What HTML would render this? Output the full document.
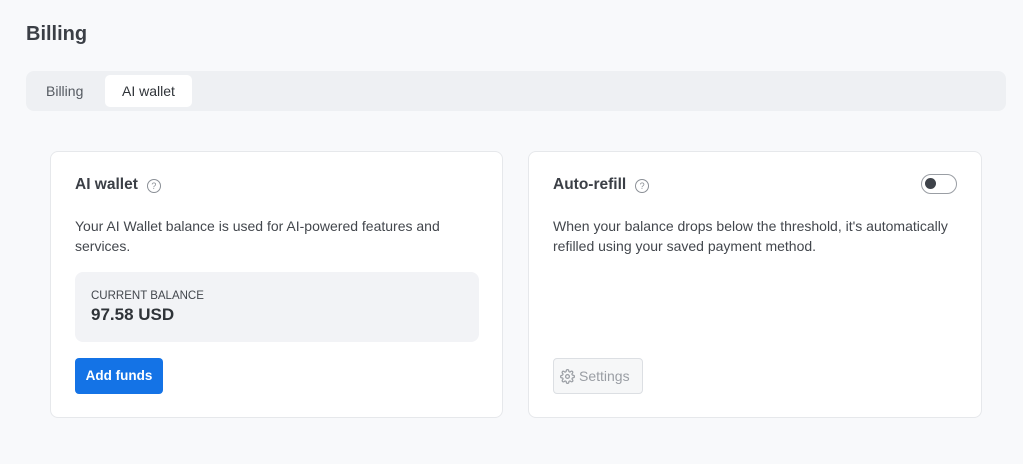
<!DOCTYPE html>
<html><head><style>
*{box-sizing:border-box;margin:0;padding:0}
body{width:1023px;height:464px;background:#f8f9fb;font-family:"Liberation Sans",Arial,sans-serif;color:#3b3f46;position:relative;overflow:hidden}
h1{position:absolute;left:26px;top:23px;font-size:20px;font-weight:bold;color:#3b3f46}
.tabs{position:absolute;left:26px;top:71px;width:980px;height:40px;background:#eef0f3;border-radius:8px}
.tab{position:absolute;top:4px;height:32px;line-height:32px;font-size:14px;color:#555a61}
.tab.a{left:79px;width:87px;background:#fff;border-radius:5px;text-align:center;color:#2f3338}
.card{position:absolute;top:151px;height:267px;background:#fff;border:1px solid #e6e8eb;border-radius:8px}
.ttl{position:absolute;left:24px;top:24px;font-size:15.5px;font-weight:bold;color:#3b3f46}
.q{display:inline-block;width:14px;height:14px;border:1.3px solid #8a8f96;border-radius:50%;font-size:9px;line-height:12px;text-align:center;color:#8a8f96;font-weight:normal;margin-left:9px;vertical-align:0px}
.p{position:absolute;left:24px;top:64px;font-size:14px;line-height:20px;color:#43474d;width:380px}
.bal{position:absolute;left:24px;top:120px;width:404px;height:70px;background:#f2f3f6;border-radius:8px}
.bl{position:absolute;left:16px;top:18px;font-size:11.5px;color:#43474d}
.bv{position:absolute;left:16px;top:33px;font-size:17px;font-weight:bold;color:#2f3338}
.btn{position:absolute;left:24px;top:206px;width:88px;height:36px;background:#1473e6;color:#fff;border-radius:4px;font-size:13.5px;font-weight:bold;line-height:36px;text-align:center}
.set{position:absolute;left:24px;top:206px;width:90px;height:36px;border:1px solid #dcdfe3;border-radius:4px;background:#f6f7f8;color:#9a9ea4;font-size:14px;line-height:34px;padding-left:25px}
.tog{position:absolute;left:392px;top:22px;width:36px;height:20px;border:1.5px solid #9a9ea4;border-radius:10px}
.tog:after{content:"";position:absolute;left:3px;top:3px;width:11px;height:11px;border-radius:50%;background:#3e4249}
</style></head><body>
<h1>Billing</h1>
<div class="tabs"><div class="tab" style="left:20px">Billing</div><div class="tab a">AI wallet</div></div>
<div class="card" style="left:50px;width:453px">
<div class="ttl">AI wallet<span class="q">?</span></div>
<div class="p">Your AI Wallet balance is used for AI-powered features and services.</div>
<div class="bal"><div class="bl">CURRENT BALANCE</div><div class="bv">97.58 USD</div></div>
<div class="btn">Add funds</div>
</div>
<div class="card" style="left:528px;width:454px">
<div class="ttl">Auto-refill<span class="q">?</span></div>
<div class="tog"></div>
<div class="p" style="width:405px">When your balance drops below the threshold, it's automatically refilled using your saved payment method.</div>
<div class="set"><svg style="position:absolute;left:6px;top:10px" width="15" height="15" viewBox="0 0 24 24" fill="none" stroke="#9a9ea4" stroke-width="2"><circle cx="12" cy="12" r="3"/><path d="M19.4 15a1.7 1.7 0 0 0 .3 1.8l.1.1a2 2 0 1 1-2.8 2.8l-.1-.1a1.7 1.7 0 0 0-1.8-.3 1.7 1.7 0 0 0-1 1.5V21a2 2 0 1 1-4 0v-.1a1.7 1.7 0 0 0-1.1-1.5 1.7 1.7 0 0 0-1.8.3l-.1.1a2 2 0 1 1-2.8-2.8l.1-.1a1.7 1.7 0 0 0 .3-1.8 1.7 1.7 0 0 0-1.5-1H3a2 2 0 1 1 0-4h.1a1.7 1.7 0 0 0 1.5-1.1 1.7 1.7 0 0 0-.3-1.8l-.1-.1a2 2 0 1 1 2.8-2.8l.1.1a1.7 1.7 0 0 0 1.8.3H9a1.7 1.7 0 0 0 1-1.5V3a2 2 0 1 1 4 0v.1a1.7 1.7 0 0 0 1 1.5 1.7 1.7 0 0 0 1.8-.3l.1-.1a2 2 0 1 1 2.8 2.8l-.1.1a1.7 1.7 0 0 0-.3 1.8V9a1.7 1.7 0 0 0 1.5 1H21a2 2 0 1 1 0 4h-.1a1.7 1.7 0 0 0-1.5 1z"/></svg>Settings</div>
</div>
</body></html>
